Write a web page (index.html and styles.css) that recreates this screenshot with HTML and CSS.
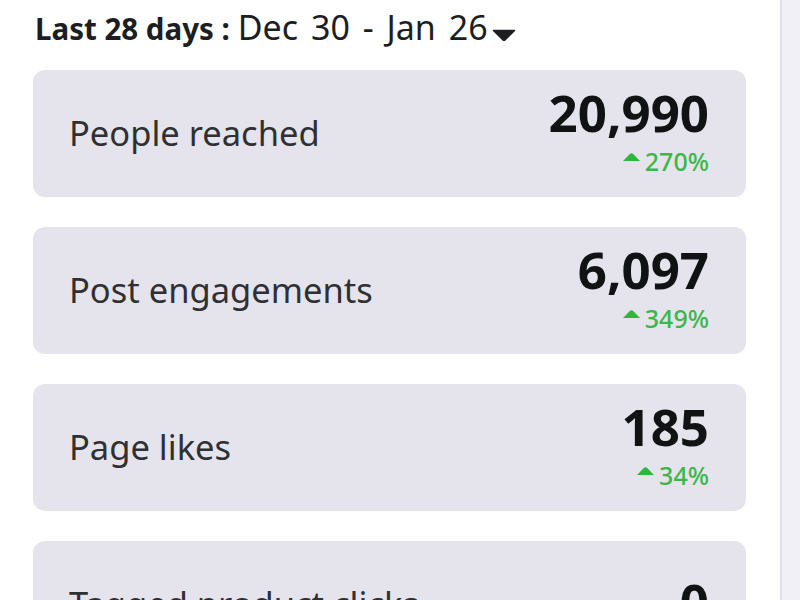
FILE: index.html
```html
<!DOCTYPE html>
<html>
<head>
<meta charset="utf-8">
<link rel="stylesheet" href="styles.css">
</head>
<body>
<div class="page">
  <main class="content">
    <div class="range">
      <span class="range-label">Last 28 days :</span>
      <span class="range-dates">Dec 30 - Jan 26</span>
      <svg class="caret" width="24" height="12" viewBox="0 0 24 12"><path d="M1.5 1.5 H22.5 L13.2 10.6 Q12 11.8 10.8 10.6 Z" fill="#1c1e21" stroke="#1c1e21" stroke-width="1.5" stroke-linejoin="round"/></svg>
    </div>
    <div class="cards">
      <div class="card">
        <div class="label">People reached</div>
        <div class="stat">
          <div class="value">20,990</div>
          <div class="change"><svg class="up" width="19" height="10" viewBox="0 0 19 10"><path d="M1 9 L7.8 2 Q9.5 0.4 11.2 2 L18 9 Z" fill="#2db83d"/></svg>270%</div>
        </div>
      </div>
      <div class="card">
        <div class="label">Post engagements</div>
        <div class="stat">
          <div class="value">6,097</div>
          <div class="change"><svg class="up" width="19" height="10" viewBox="0 0 19 10"><path d="M1 9 L7.8 2 Q9.5 0.4 11.2 2 L18 9 Z" fill="#2db83d"/></svg>349%</div>
        </div>
      </div>
      <div class="card">
        <div class="label">Page likes</div>
        <div class="stat">
          <div class="value">185</div>
          <div class="change"><svg class="up" width="19" height="10" viewBox="0 0 19 10"><path d="M1 9 L7.8 2 Q9.5 0.4 11.2 2 L18 9 Z" fill="#2db83d"/></svg>34%</div>
        </div>
      </div>
      <div class="card">
        <div class="label">Tagged product clicks</div>
        <div class="stat">
          <div class="value">0</div>
        </div>
      </div>
    </div>
  </main>
  <aside class="side"></aside>
</div>
</body>
</html>
```

FILE: styles.css
```css
html, body {
  margin: 0;
  padding: 0;
  height: 100%;
  overflow: hidden;
  background: #ffffff;
  font-family: "Noto Sans", "Open Sans", sans-serif;
  color: #1c1e21;
}

.page {
  display: flex;
  height: 600px;
}

.content {
  width: 780px;
  padding-left: 33px;
  box-sizing: border-box;
}

.side {
  flex: 1;
  border-left: 2px solid #e2e2e6;
  background: #f0f0f6;
}

.range {
  display: flex;
  align-items: baseline;
  height: 70px;
  box-sizing: border-box;
  line-height: 55px;
  padding-left: 2px;
}

.range-label {
  font-weight: 700;
  font-size: 29.5px;
  margin-right: 8px;
  color: #1c1e21;
}

.range-dates {
  font-size: 34px;
  font-weight: 400;
  color: #1c1e21;
  word-spacing: 4px;
}

.caret {
  align-self: center;
  margin-left: 4px;
  margin-top: 0;
}

.cards {
  display: flex;
  flex-direction: column;
  gap: 30px;
  width: 713px;
}

.card {
  height: 127px;
  background: #e5e4ed;
  border-radius: 12px;
  display: flex;
  align-items: center;
  justify-content: space-between;
  padding: 0 37px 0 36px;
  box-sizing: border-box;
}

.label {
  font-size: 34.5px;
  color: #2f3033;
  padding-bottom: 3px;
}

.stat {
  display: flex;
  flex-direction: column;
  align-items: flex-end;
  padding-bottom: 8px;
}

.value {
  font-size: 51px;
  font-weight: 700;
  line-height: 56px;
  color: #111214;
}

.change {
  display: flex;
  align-items: center;
  font-size: 25px;
  line-height: 30px;
  color: #3db64a;
  font-weight: 500;
  margin-top: 6px;
}

.up {
  margin-right: 4px;
  margin-top: -8px;
}
```
